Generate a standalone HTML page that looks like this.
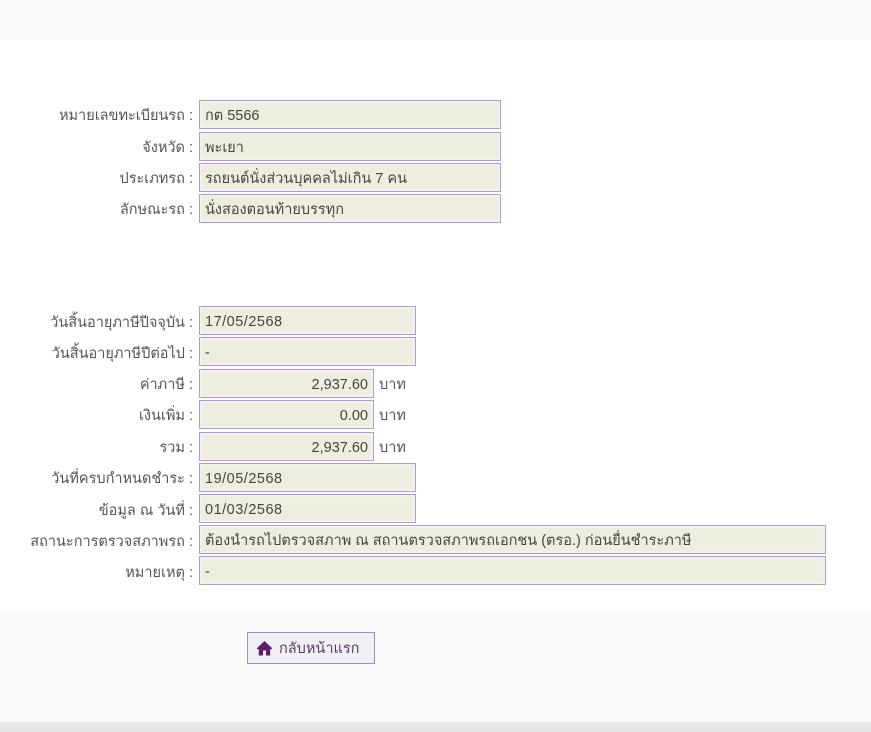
<!DOCTYPE html>
<html lang="th"><head><meta charset="utf-8"><title>ข้อมูลรถ</title>
<style>
html,body{margin:0;padding:0;background:#fff}
body{width:871px;height:732px;position:relative;overflow:hidden;font-family:"Liberation Sans","Noto Sans CJK SC",sans-serif;font-size:14.5px;color:#444}
.a{position:absolute}
.l{position:absolute;right:678px;white-space:nowrap;color:#555;line-height:32px;height:32px}
.f{position:absolute;left:199px;height:29px;line-height:30px;box-sizing:border-box;border:1px solid #b29bcd;background:#eeeee0;box-shadow:inset 0 0 0 2px #f2f1ef;padding:0 5px;white-space:nowrap;color:#444;overflow:hidden}
.r{text-align:right}
.d{letter-spacing:.5px}
.u{position:absolute;left:379px;line-height:32px;height:32px;color:#555}
</style></head><body>
<div class="a" style="left:0;top:0;width:871px;height:40px;background:#f9f9f9"></div>

<div class="l" style="top:100px">หมายเลขทะเบียนรถ :</div><div class="f" style="top:100px;width:302px">กต 5566</div>
<div class="l" style="top:132px">จังหวัด :</div><div class="f" style="top:132px;width:302px">พะเยา</div>
<div class="l" style="top:163px">ประเภทรถ :</div><div class="f" style="top:163px;width:302px">รถยนต์นั่งส่วนบุคคลไม่เกิน 7 คน</div>
<div class="l" style="top:194px">ลักษณะรถ :</div><div class="f" style="top:194px;width:302px">นั่งสองตอนท้ายบรรทุก</div>

<div class="l" style="top:307px">วันสิ้นอายุภาษีปีจจุบัน :</div><div class="f d" style="top:306px;width:217px">17/05/2568</div>
<div class="l" style="top:338px">วันสิ้นอายุภาษีปีต่อไป :</div><div class="f" style="top:337px;width:217px">-</div>
<div class="l" style="top:369px">ค่าภาษี :</div><div class="f r" style="top:369px;width:175px">2,937.60</div><div class="u" style="top:369px">บาท</div>
<div class="l" style="top:400px">เงินเพิ่ม :</div><div class="f r" style="top:400px;width:175px">0.00</div><div class="u" style="top:400px">บาท</div>
<div class="l" style="top:432px">รวม :</div><div class="f r" style="top:432px;width:175px">2,937.60</div><div class="u" style="top:432px">บาท</div>
<div class="l" style="top:463px">วันที่ครบกำหนดชำระ :</div><div class="f d" style="top:463px;width:217px">19/05/2568</div>
<div class="l" style="top:495px">ข้อมูล ณ วันที่ :</div><div class="f d" style="top:494px;width:217px">01/03/2568</div>
<div class="l" style="top:526px">สถานะการตรวจสภาพรถ :</div><div class="f" style="top:525px;width:627px">ต้องนำรถไปตรวจสภาพ ณ สถานตรวจสภาพรถเอกชน (ตรอ.) ก่อนยื่นชำระภาษี</div>
<div class="l" style="top:557px">หมายเหตุ :</div><div class="f" style="top:556px;width:627px">-</div>

<div class="a" style="left:0;top:610px;width:871px;height:112px;background:#fafafa"></div>
<div class="a" style="left:0;top:722px;width:871px;height:10px;background:#e6e6e6"></div>
<div class="a" style="left:247px;top:632px;width:128px;height:32px;box-sizing:border-box;border:1px solid #a48cc0;background:#f1f0f2;color:#5a3a6a;line-height:32px;padding-left:31px;white-space:nowrap">กลับหน้าแรก</div>
<svg class="a" style="left:256px;top:640px" width="17" height="16" viewBox="0 0 17 16"><path fill="#5b1f6e" fill-rule="evenodd" d="M8.5 1 0.8 8.3 1.6 9.2H2.8V15.5H14.2V9.2H15.4L16.2 8.3ZM7 10.5H10V15.5H7Z"/></svg>
</body></html>
